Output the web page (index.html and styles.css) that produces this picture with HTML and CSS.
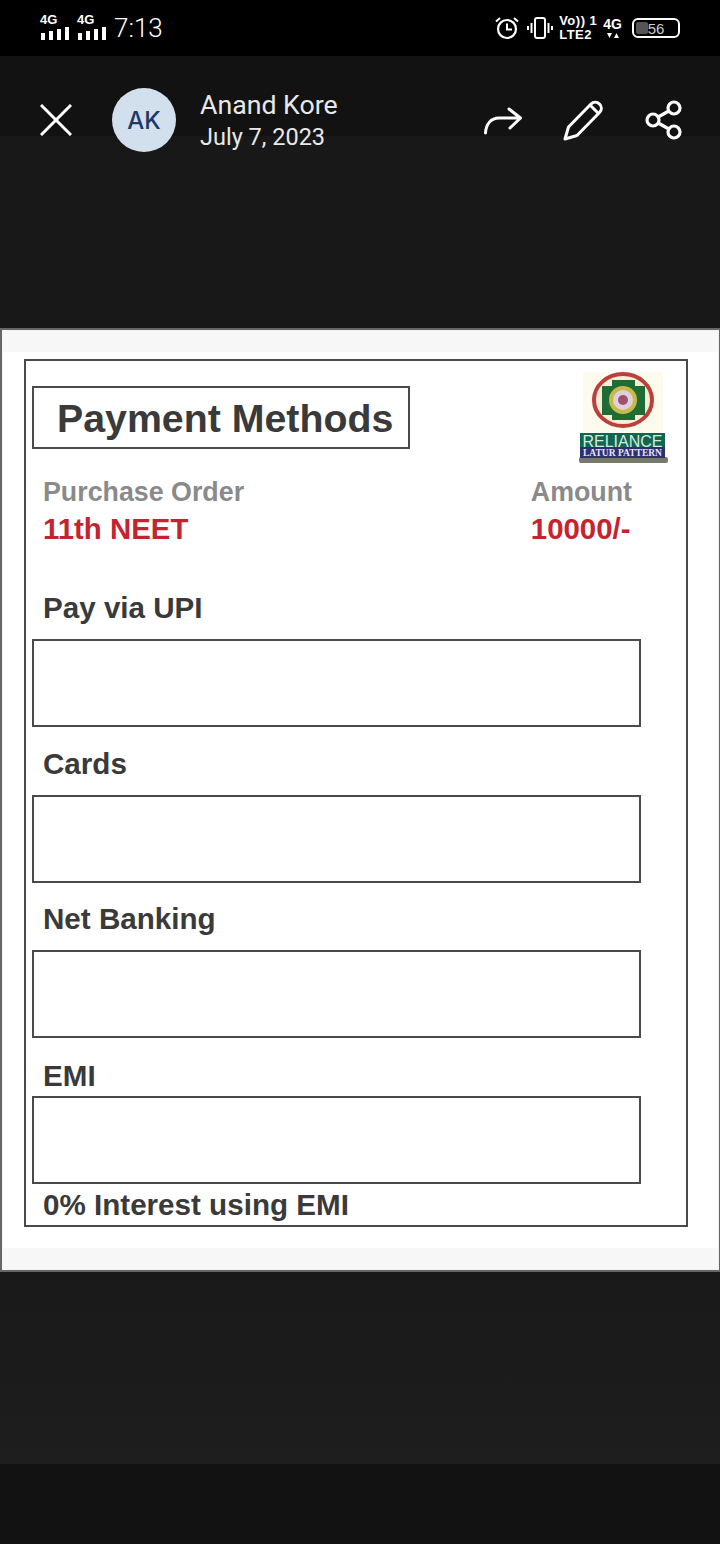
FILE: index.html
```html
<!DOCTYPE html>
<html lang="en">

<head>
  <meta charset="UTF-8" />
  <title>Payment Methods</title>
  <link rel="stylesheet" href="styles.css">
</head>

<body>
  <div class="status-bar">
    <div class="status-left">
      <div class="signal">
        <span class="signal-label">4G</span>
        <div class="bars"><i class="b1"></i><i class="b2"></i><i class="b3"></i><i class="b4"></i></div>
      </div>
      <div class="signal">
        <span class="signal-label">4G</span>
        <div class="bars"><i class="b1"></i><i class="b2"></i><i class="b3"></i><i class="b4"></i></div>
      </div>
      <span class="clock">7:13</span>
    </div>
    <div class="status-right">
      <svg class="alarm" width="24" height="24" viewBox="0 0 24 24" fill="none" stroke="#fff">
        <circle cx="12" cy="13" r="9" stroke-width="2.2" />
        <path d="M12 7.500V13.500H17" stroke-width="2" />
        <path d="M1 5.500L5 2M23 5.500L19 2" stroke-width="2" />
      </svg>
      <svg class="vibrate" width="26" height="24" viewBox="0 0 26 24" fill="none" stroke="#fff" stroke-width="2">
        <rect x="8" y="2" width="10" height="20" rx="2" />
        <path d="M4.500 7V17M1 10V14M21.500 7V17M25 10V14" />
      </svg>
      <div class="volte">
        <span>Vo)) 1</span>
        <span>LTE2</span>
      </div>
      <div class="net">
        <span>4G</span>
        <svg width="12" height="6" viewBox="0 0 12 6" fill="#fff"><path d="M0 0H5L2.500 5ZM7 5H12L9.500 0Z" /></svg>
      </div>
      <div class="battery">
        <div class="battery-fill"></div>
        <span>56</span>
      </div>
    </div>
  </div>

  <div class="viewer-top">
    <div class="toolbar">
      <svg class="close-icon" width="32" height="32" viewBox="0 0 32 32" fill="none" stroke="#fff" stroke-width="3">
        <path d="M1 1L31 31M31 1L1 31" />
      </svg>
      <div class="avatar">AK</div>
      <div class="sender">
        <div class="sender-name">Anand Kore</div>
        <div class="sender-date">July 7, 2023</div>
      </div>
      <div class="actions">
        <svg class="forward-icon" width="40" height="28" viewBox="0 0 40 28" fill="none" stroke="#fff" stroke-width="3" stroke-linecap="round" stroke-linejoin="round">
          <path d="M2.500 26C3 17 8 11 16 11H37M26 2L37.500 11L27 21" />
        </svg>
        <svg width="42" height="42" viewBox="0 0 42 42" fill="none" stroke="#fff" stroke-width="3" stroke-linejoin="round">
          <path d="M2 40L5.500 28L28 5C30.500 2.500 34 2.500 36.500 5C39 7.500 39 11 36.500 13.500L14 36.500Z" />
          <path d="M27.500 6.500L35 14" />
        </svg>
        <svg width="38" height="40" viewBox="0 0 38 40" fill="none" stroke="#fff" stroke-width="3.200">
          <circle cx="8" cy="20" r="6" />
          <circle cx="29" cy="8" r="6" />
          <circle cx="29" cy="32" r="6" />
          <path d="M13.200 17L23.800 11M13.200 23L23.800 29" />
        </svg>
      </div>
    </div>
  </div>

  <div class="sheet">
    <div class="frame">
      <div class="title-row">
        <div class="title-box">Payment Methods</div>
        <svg class="logo" width="94" height="94" viewBox="0 0 94 94">
          <rect x="8" y="0" width="80" height="62" fill="#fdfbee" />
          <ellipse cx="48" cy="28" rx="29" ry="26" fill="#f6efd8" stroke="#bb3f3a" stroke-width="4" />
          <rect x="27" y="14" width="43" height="29" fill="#1f6d35" />
          <rect x="37" y="8" width="23" height="40" fill="#1f6d35" />
          <circle cx="48" cy="28" r="14" fill="#c9b84a" />
          <circle cx="48" cy="28" r="10" fill="#dcd2d8" />
          <circle cx="48" cy="28" r="5" fill="#a0506f" />
          <rect x="4" y="85" width="89" height="6" rx="2" fill="#77796a" />
          <rect x="5" y="61" width="85" height="15" fill="#12664f" />
          <rect x="5" y="75" width="85" height="11" fill="#2e2f72" />
          <text x="47.500" y="75" text-anchor="middle" class="logo-main">RELIANCE</text>
          <text x="47.500" y="84" text-anchor="middle" class="logo-sub">LATUR PATTERN</text>
        </svg>
      </div>

      <div class="order-row">
        <div>
          <div class="order-label">Purchase Order</div>
          <div class="order-value">11th NEET</div>
        </div>
        <div class="order-amount">
          <div class="order-label">Amount</div>
          <div class="order-value">10000/-</div>
        </div>
      </div>

      <div class="method method-first">
        <div class="method-label">Pay via UPI</div>
        <div class="method-box"></div>
      </div>
      <div class="method">
        <div class="method-label">Cards</div>
        <div class="method-box"></div>
      </div>
      <div class="method">
        <div class="method-label">Net Banking</div>
        <div class="method-box"></div>
      </div>
      <div class="method method-emi">
        <div class="method-label">EMI</div>
        <div class="method-box"></div>
      </div>
      <div class="method-label emi-note">0% Interest using EMI</div>
    </div>
  </div>

  <div class="viewer-bottom"></div>
</body>

</html>
```

FILE: styles.css
```css
:root {
  --ink: #3a3a3a;
  --line: #4a4a4a;
  --muted: #8a8a8a;
  --red: #c4232f;
}

* {
  box-sizing: border-box;
  margin: 0;
  padding: 0;
}

body {
  width: 720px;
  height: 1544px;
  overflow: hidden;
  display: flex;
  flex-direction: column;
  background-color: #181818;
  font-family: 'Liberation Sans', Arial, sans-serif;
}

.status-bar {
  height: 56px;
  background-color: #000;
  color: #fff;
  display: flex;
  align-items: center;
  justify-content: space-between;
  padding: 0 40px;
}

.status-left {
  display: flex;
  align-items: center;
  gap: 6px;
}

.signal {
  width: 31px;
  display: flex;
  flex-direction: column;
  gap: 1px;
  margin-top: -3px;
}

.signal-label {
  font-size: 13px;
  line-height: 12px;
  font-weight: 700;
}

.bars {
  display: flex;
  align-items: flex-end;
  gap: 4px;
  height: 13px;
  padding-left: 1px;
}

.bars i {
  width: 4px;
  background-color: #fff;
}

.bars .b1 { height: 7px; }
.bars .b2 { height: 9px; }
.bars .b3 { height: 11px; }
.bars .b4 { height: 13px; }

.clock {
  font-family: 'Roboto', sans-serif;
  font-size: 26px;
  font-weight: 300;
  color: #fff;
}

.status-right {
  display: flex;
  align-items: center;
  gap: 6px;
}

.alarm {
  margin-right: 2px;
}

.volte {
  display: flex;
  flex-direction: column;
  font-size: 13px;
  line-height: 14px;
  font-weight: 700;
  letter-spacing: 0.5px;
  white-space: nowrap;
}

.net {
  display: flex;
  flex-direction: column;
  align-items: center;
  font-size: 14px;
  line-height: 15px;
  font-weight: 700;
  gap: 1px;
}

.battery {
  position: relative;
  width: 48px;
  height: 20px;
  margin-left: 4px;
  border: 2px solid #fff;
  border-radius: 6px;
  display: flex;
  align-items: center;
  justify-content: center;
  font-size: 15px;
  color: #ccc;
}

.battery-fill {
  position: absolute;
  left: 2px;
  top: 2px;
  bottom: 2px;
  width: 12px;
  background-color: #555;
  border-radius: 2px;
}

.battery span {
  position: relative;
}

.viewer-top {
  height: 272px;
  background: linear-gradient(#121212 80px, #181818 80px);
}

.toolbar {
  height: 128px;
  padding: 0 37px 0 40px;
  display: flex;
  align-items: center;
}

.close-icon {
  margin-right: 40px;
}

.avatar {
  width: 64px;
  height: 64px;
  border-radius: 50%;
  background-color: #d2e0ee;
  color: #1f3864;
  font-family: 'Inter', sans-serif;
  font-size: 24px;
  font-weight: 500;
  display: flex;
  align-items: center;
  justify-content: center;
  margin-right: 24px;
}

.sender {
  font-family: 'Roboto', sans-serif;
  color: #e8e8e8;
}

.sender-name {
  font-size: 26.700px;
  line-height: 34px;
}

.sender-date {
  font-size: 23.500px;
  line-height: 30px;
}

.actions {
  margin-left: auto;
  display: flex;
  align-items: center;
  gap: 40px;
}

.forward-icon {
  margin-top: 2px;
}

.sheet {
  height: 944px;
  background-color: #fff;
  border: 2px solid #666;
  border-right-width: 1px;
  padding: 29px 31px 44px 22px;
  box-shadow: inset 0 0 0 1px #f2f2f2, inset 0 22px 0 #f7f7f7, inset 0 -22px 0 #f7f7f7;
}

.frame {
  height: 868px;
  border: 2px solid var(--line);
  padding: 25px 0 0 6px;
  background-color: #fff;
}

.title-row {
  display: flex;
  justify-content: space-between;
  align-items: flex-start;
  padding-right: 17px;
  height: 88px;
}

.title-box {
  width: 378px;
  height: 63px;
  border: 2px solid var(--line);
  padding-left: 23px;
  font-size: 39.300px;
  line-height: 60px;
  font-weight: 700;
  color: var(--ink);
}

.logo {
  margin-top: -14px;
}

.logo-main {
  font-family: 'Liberation Sans', sans-serif;
  font-size: 16px;
  fill: #cfeee0;
}

.logo-sub {
  font-family: 'Liberation Serif', serif;
  font-size: 9.500px;
  font-weight: 700;
  fill: #e6e6f4;
}

.order-row {
  display: flex;
  justify-content: space-between;
  padding: 0 54px 0 11px;
  height: 116px;
}

.order-label {
  font-size: 26.800px;
  line-height: 36px;
  font-weight: 700;
  color: var(--muted);
}

.order-value {
  font-size: 29.400px;
  line-height: 38px;
  font-weight: 700;
  color: var(--red);
}

.method {
  margin-bottom: 18px;
}

.method-first {
  margin-bottom: 19px;
}

.method-label {
  font-size: 29.600px;
  line-height: 36px;
  font-weight: 700;
  color: var(--ink);
  padding-left: 11px;
}

.method-box {
  width: 609px;
  height: 88px;
  margin-top: 13px;
  border: 2px solid var(--line);
  background-color: #fff;
}

.method-emi {
  margin-top: 20px;
  margin-bottom: 3px;
}

.method-emi .method-box {
  margin-top: 2px;
}

.viewer-bottom {
  flex: 1;
  background: linear-gradient(#191919, #1e1e1e 192px, #121212 192px);
}
```
